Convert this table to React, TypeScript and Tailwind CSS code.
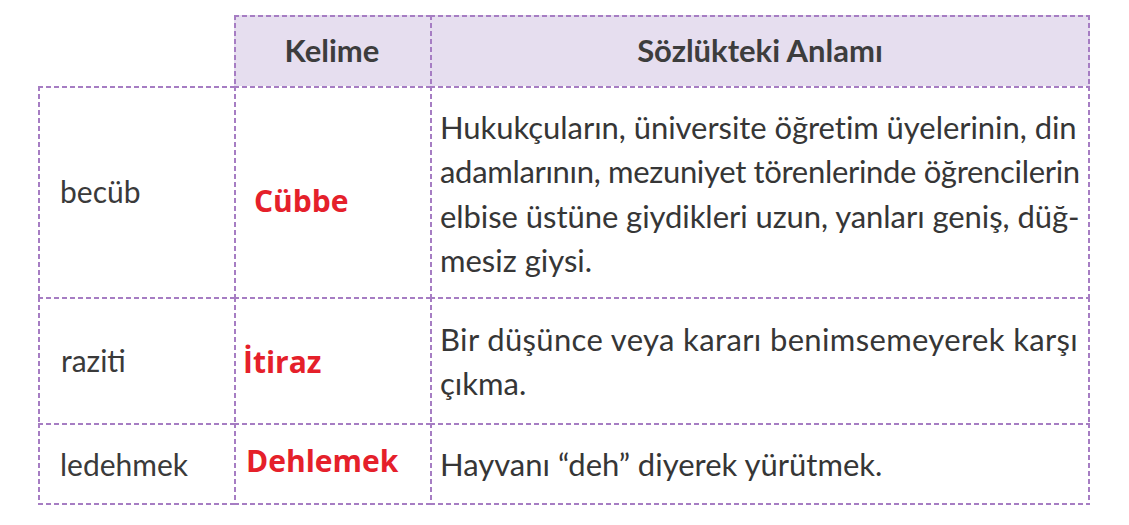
import React from "react";

const TL =
  "[background-image:repeating-linear-gradient(90deg,#a67dc3_0_5px,transparent_5px_8px),repeating-linear-gradient(180deg,#a67dc3_0_5px,transparent_5px_8px)] [background-size:100%_2px,2px_100%] [background-position:left_top,left_top] bg-no-repeat";
const TLR =
  "[background-image:repeating-linear-gradient(90deg,#a67dc3_0_5px,transparent_5px_8px),repeating-linear-gradient(180deg,#a67dc3_0_5px,transparent_5px_8px),repeating-linear-gradient(180deg,#a67dc3_0_5px,transparent_5px_8px)] [background-size:100%_2px,2px_100%,2px_100%] [background-position:left_top,left_top,right_top] bg-no-repeat";
const TLB =
  "[background-image:repeating-linear-gradient(90deg,#a67dc3_0_5px,transparent_5px_8px),repeating-linear-gradient(180deg,#a67dc3_0_5px,transparent_5px_8px),repeating-linear-gradient(90deg,#a67dc3_0_5px,transparent_5px_8px)] [background-size:100%_2px,2px_100%,100%_2px] [background-position:left_top,left_top,left_bottom] bg-no-repeat";
const TLRB =
  "[background-image:repeating-linear-gradient(90deg,#a67dc3_0_5px,transparent_5px_8px),repeating-linear-gradient(180deg,#a67dc3_0_5px,transparent_5px_8px),repeating-linear-gradient(180deg,#a67dc3_0_5px,transparent_5px_8px),repeating-linear-gradient(90deg,#a67dc3_0_5px,transparent_5px_8px)] [background-size:100%_2px,2px_100%,2px_100%,100%_2px] [background-position:left_top,left_top,right_top,left_bottom] bg-no-repeat";

const left = "font-['Lato',sans-serif] text-[30px] text-[#3a3a3a]";
const body = "font-['Lato',sans-serif] text-[31px] text-[#363636] whitespace-nowrap";
const red = "font-['Open_Sans',sans-serif] font-bold text-[30px] text-[#e5202a]";
const head = "font-['Lato',sans-serif] font-bold text-[31px] text-[#3d3d3d]";

export default function App() {
  return (
    <div className="w-[1129px] h-[525px] bg-white pt-[15px] pl-[38px]">
      <div className="grid grid-cols-[196px_196px_660px] grid-rows-[71px_211px_126px_82px]">
        <div />
        <div className={`${TL} bg-[#e6deef] flex items-center justify-center ${head}`}>
          Kelime
        </div>
        <div className={`${TLR} bg-[#e6deef] flex items-center justify-center ${head}`}>
          Sözlükteki Anlamı
        </div>

        <div className={`${TL} flex items-center pl-[22px] ${left}`}>becüb</div>
        <div className={`${TL} flex items-center pl-[20px] pt-[18px] ${red}`}>Cübbe</div>
        <div className={`${TLR} flex flex-col justify-center pl-[10px] pt-[4px] leading-[44.5px] ${body}`}>
          <span className="tracking-[-0.05px]">Hukukçuların, üniversite öğretim üyelerinin, din</span>
          <span className="tracking-[-0.32px]">adamlarının, mezuniyet törenlerinde öğrencilerin</span>
          <span className="tracking-[-0.06px]">elbise üstüne giydikleri uzun, yanları geniş, düğ-</span>
          <span>mesiz giysi.</span>
        </div>

        <div className={`${TL} flex items-center pl-[23px] ${left}`}>raziti</div>
        <div className={`${TL} flex items-center pl-[9px] pt-[2px] ${red}`}>İtiraz</div>
        <div className={`${TLR} flex flex-col justify-center pl-[10px] pt-[2px] leading-[44.5px] ${body}`}>
          <span className="tracking-[0.36px]">Bir düşünce veya kararı benimsemeyerek karşı</span>
          <span>çıkma.</span>
        </div>

        <div className={`${TLB} flex items-center pl-[22px] ${left}`}>ledehmek</div>
        <div className={`${TLB} flex items-center pl-[12px] pb-[8px] ${red}`}>Dehlemek</div>
        <div className={`${TLRB} flex items-center pl-[10px] ${body}`}>
          Hayvanı “deh” diyerek yürütmek.
        </div>
      </div>
    </div>
  );
}
